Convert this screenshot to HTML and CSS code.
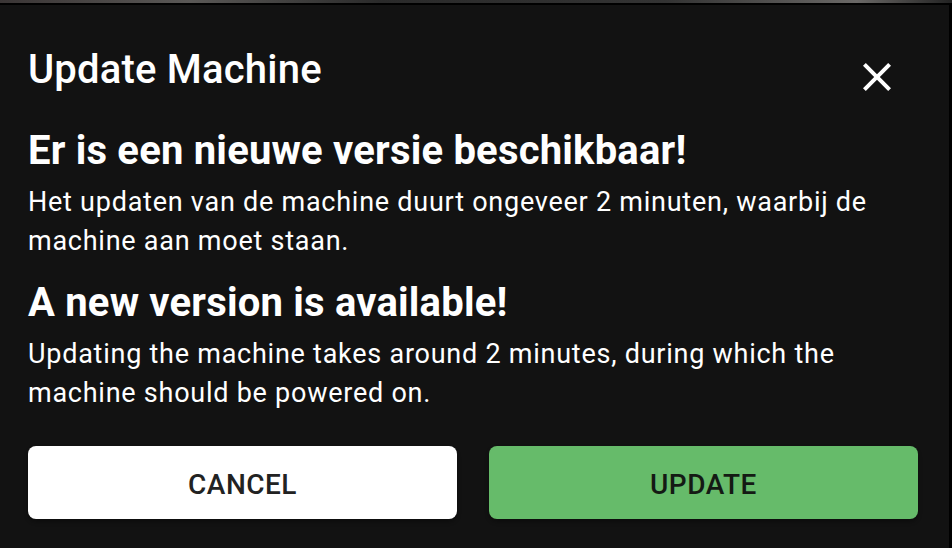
FILE: index.html
```html
<!DOCTYPE html>
<html lang="en">
<head>
    <meta charset="UTF-8">
    <meta name="viewport" content="width=device-width, initial-scale=1.0">
    <title>Update Machine</title>
    <link rel="stylesheet" href="styles.css">
</head>
<body>
    <div class="backdrop-strip"></div>

    <!-- Update dialog -->
    <div class="dialog">
        <div class="dialog-header">
            <h1>Update Machine</h1>
            <button class="close-btn" aria-label="Close">
                <svg viewBox="0 0 24 24" width="48" height="48">
                    <path d="M19 6.41 17.59 5 12 10.59 6.41 5 5 6.41 10.59 12 5 17.59 6.41 19 12 13.41 17.59 19 19 17.59 13.41 12z" fill="#fff"/>
                </svg>
            </button>
        </div>

        <div class="dialog-content">
            <h2>Er is een nieuwe versie beschikbaar!</h2>
            <p>Het updaten van de machine duurt ongeveer 2 minuten, waarbij de machine aan moet staan.</p>
            <h2>A new version is available!</h2>
            <p>Updating the machine takes around 2 minutes, during which the machine should be powered on.</p>
        </div>

        <div class="dialog-actions">
            <button class="btn btn-cancel">Cancel</button>
            <button class="btn btn-update">Update</button>
        </div>
    </div>
</body>
</html>
```

FILE: styles.css
```css
body {
    margin: 0;
    padding: 0;
    background-color: #000;
    font-family: Roboto, "Liberation Sans", sans-serif;
    color: #fff;
    overflow: hidden;
}

.backdrop-strip {
    height: 3px;
    background: linear-gradient(90deg, #3a3535 0%, #5a5856 20%, #2a2a2a 40%, #333 70%, #6a6866 90%, #222 100%);
}

.dialog {
    width: 949px;
    height: 560px;
    margin-top: 2px;
    padding: 41px 0 0 28px;
    background-color: #121212;
    box-sizing: border-box;
}

.dialog-header {
    display: flex;
    align-items: flex-start;
    justify-content: space-between;
    width: 873px;
    height: 54px;
}

h1 {
    margin: 0;
    font-size: 40px;
    font-weight: 500;
    line-height: 48px;
    letter-spacing: 0.2px;
}

.close-btn {
    background: none;
    border: none;
    padding: 0;
    margin-top: 7px;
    width: 48px;
    height: 48px;
    cursor: pointer;
}

.close-btn svg {
    display: block;
}

.dialog-content {
    width: 890px;
    padding-top: 9px;
}

h2 {
    margin: 18px 0 0;
    font-size: 40px;
    font-weight: 700;
    line-height: 48px;
    letter-spacing: 0.2px;
}

p {
    margin: 8px 0 0;
    font-size: 27px;
    line-height: 39px;
    letter-spacing: 0.75px;
}

.dialog-actions {
    display: flex;
    gap: 32px;
    width: 890px;
    margin-top: 33px;
}

.btn {
    flex: 1;
    height: 73px;
    padding-top: 4px;
    border: none;
    border-radius: 8px;
    font-family: Roboto, "Liberation Sans", sans-serif;
    font-size: 28px;
    font-weight: 500;
    letter-spacing: 0.5px;
    text-transform: uppercase;
    box-shadow: 0 3px 4px rgba(0, 0, 0, 0.3);
    cursor: pointer;
}

.btn-cancel {
    background-color: #fff;
    color: #222;
}

.btn-update {
    background-color: #66bb6a;
    color: #141a14;
}
```
